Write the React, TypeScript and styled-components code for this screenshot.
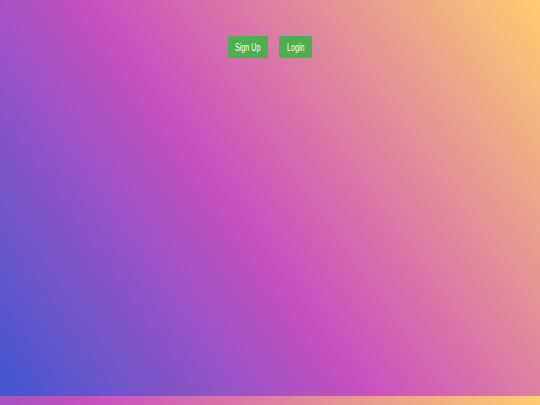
import { createGlobalStyle, styled } from 'styled-components';

const GlobalStyle = createGlobalStyle`
  html, body {
    margin: 0;
    padding: 0;
  }
  body {
    font-family: 'Liberation Sans', Arial, sans-serif;
    background: linear-gradient(55deg, #4158d0 0%, #c850c0 45%, #ffcc70 100%);
  }
`;

const Page = styled.main`
  height: 396px;
  box-sizing: border-box;
  padding-top: 36px;
`;

const Nav = styled.nav`
  display: flex;
  justify-content: center;
  gap: 11px;
`;

const NavButton = styled.button<{ $w: number }>`
  width: ${({ $w }) => $w}px;
  height: 22px;
  padding: 0;
  border: none;
  border-radius: 2px;
  background: #4caf50;
  color: #fff;
  font-family: inherit;
  font-size: 10.5px;
  display: flex;
  align-items: center;
  justify-content: center;
  cursor: pointer;

  span {
    display: inline-block;
    white-space: nowrap;
    transform: scaleX(0.68);
  }
`;

export default function App() {
  return (
    <>
      <GlobalStyle />
      <Page>
        <Nav>
          <NavButton $w={40}>
            <span>Sign Up</span>
          </NavButton>
          <NavButton $w={33}>
            <span>Login</span>
          </NavButton>
        </Nav>
      </Page>
    </>
  );
}
